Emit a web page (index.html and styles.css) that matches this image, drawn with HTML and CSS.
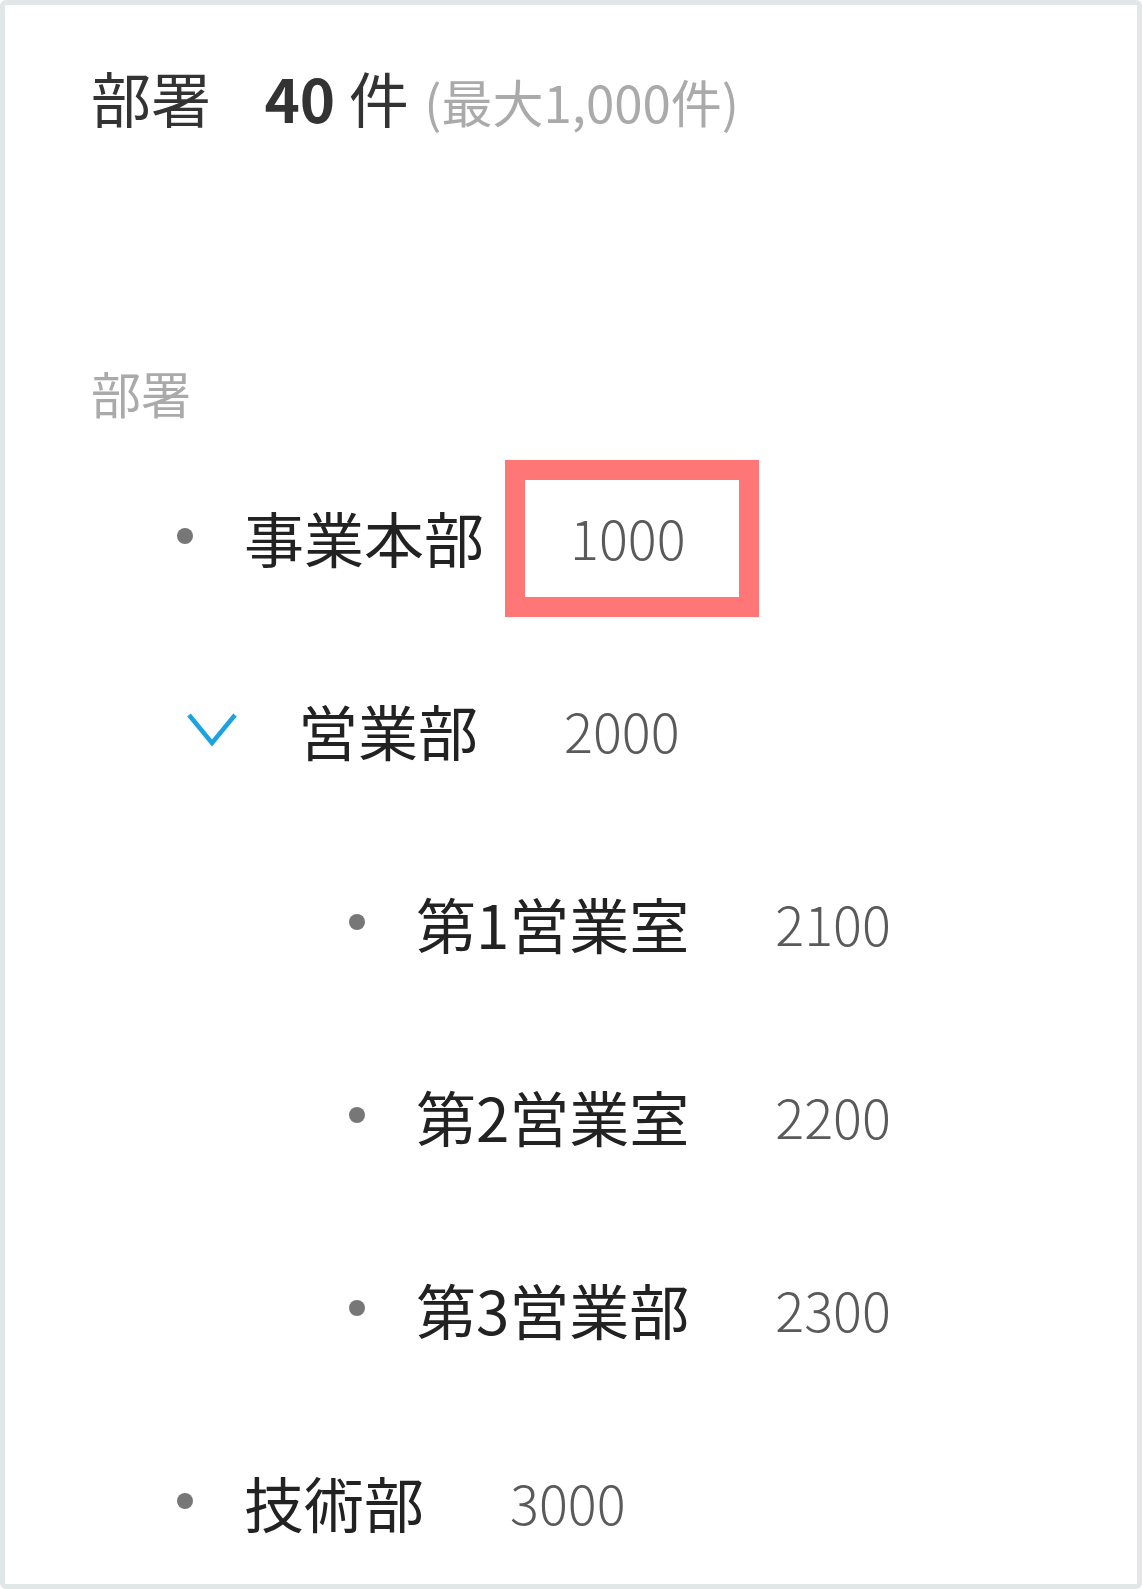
FILE: index.html
```html
<!DOCTYPE html>
<html lang="ja">
<head>
    <meta charset="UTF-8">
    <meta name="viewport" content="width=device-width, initial-scale=1.0">
    <title>部署</title>
    <link rel="stylesheet" href="styles.css">
</head>
<body>
    <div class="panel">
        <h1 class="summary">
            <span class="summary-label">部署</span>
            <span class="summary-count">40</span> 件
            <span class="summary-max">(最大1,000件)</span>
        </h1>

        <div class="field-label">部署</div>

        <ul class="tree">
            <li class="row">
                <span class="dot"></span>
                <span class="name">事業本部</span>
                <span class="code highlight">1000</span>
            </li>
            <li class="row">
                <svg class="chevron" width="52" height="40" viewBox="0 0 52 40">
                    <path d="M3 6 L26 34 L49 6" fill="none" stroke="#1aa3e0" stroke-width="4.5"/>
                </svg>
                <span class="name">営業部</span>
                <span class="code">2000</span>
            </li>
            <li class="row child">
                <span class="dot"></span>
                <span class="name">第1営業室</span>
                <span class="code">2100</span>
            </li>
            <li class="row child">
                <span class="dot"></span>
                <span class="name">第2営業室</span>
                <span class="code">2200</span>
            </li>
            <li class="row child">
                <span class="dot"></span>
                <span class="name">第3営業部</span>
                <span class="code">2300</span>
            </li>
            <li class="row">
                <span class="dot"></span>
                <span class="name">技術部</span>
                <span class="code">3000</span>
            </li>
        </ul>
    </div>
</body>
</html>
```

FILE: styles.css
```css
* {
    box-sizing: border-box;
}

body {
    margin: 0;
    font-family: 'Noto Sans CJK JP', 'Noto Sans', sans-serif;
    color: #333;
    background: #fff;
}

.panel {
    width: 1142px;
    height: 1589px;
    border: 5px solid #e1e6e6;
    border-radius: 6px;
    padding: 48px 0 0 86px;
    overflow: hidden;
}

.summary {
    margin: 0;
    font-size: 60px;
    line-height: 87px;
    font-weight: 400;
    color: #333;
}

.summary-label {
    margin-right: 40px;
}

.summary-count {
    font-weight: 700;
}

.summary-max {
    margin-left: 2px;
    font-size: 51px;
    color: #aaa;
}

.field-label {
    margin-top: 210px;
    font-size: 50px;
    line-height: 75px;
    color: #aaa;
}

.tree {
    list-style: none;
    margin: 46px 0 0;
    padding: 0;
    display: flex;
    flex-direction: column;
    gap: 73px;
}

.row {
    height: 120px;
    display: flex;
    align-items: center;
    padding-left: 86px;
    font-size: 60px;
}

.row.child {
    padding-left: 258px;
}

.dot {
    width: 16px;
    height: 16px;
    border-radius: 50%;
    background: #777;
    margin-right: 51px;
    flex-shrink: 0;
}

.chevron {
    margin-left: 9px;
    margin-right: 60px;
    flex-shrink: 0;
}

.name {
    color: #222;
}

.code {
    margin-left: 86px;
    font-size: 54px;
    font-weight: 300;
    color: #5a5a5a;
}

.highlight {
    position: relative;
}

.highlight::after {
    content: "";
    position: absolute;
    left: -65px;
    right: -73px;
    top: -37px;
    bottom: -41px;
    border: 20px solid #ff7676;
}
```
